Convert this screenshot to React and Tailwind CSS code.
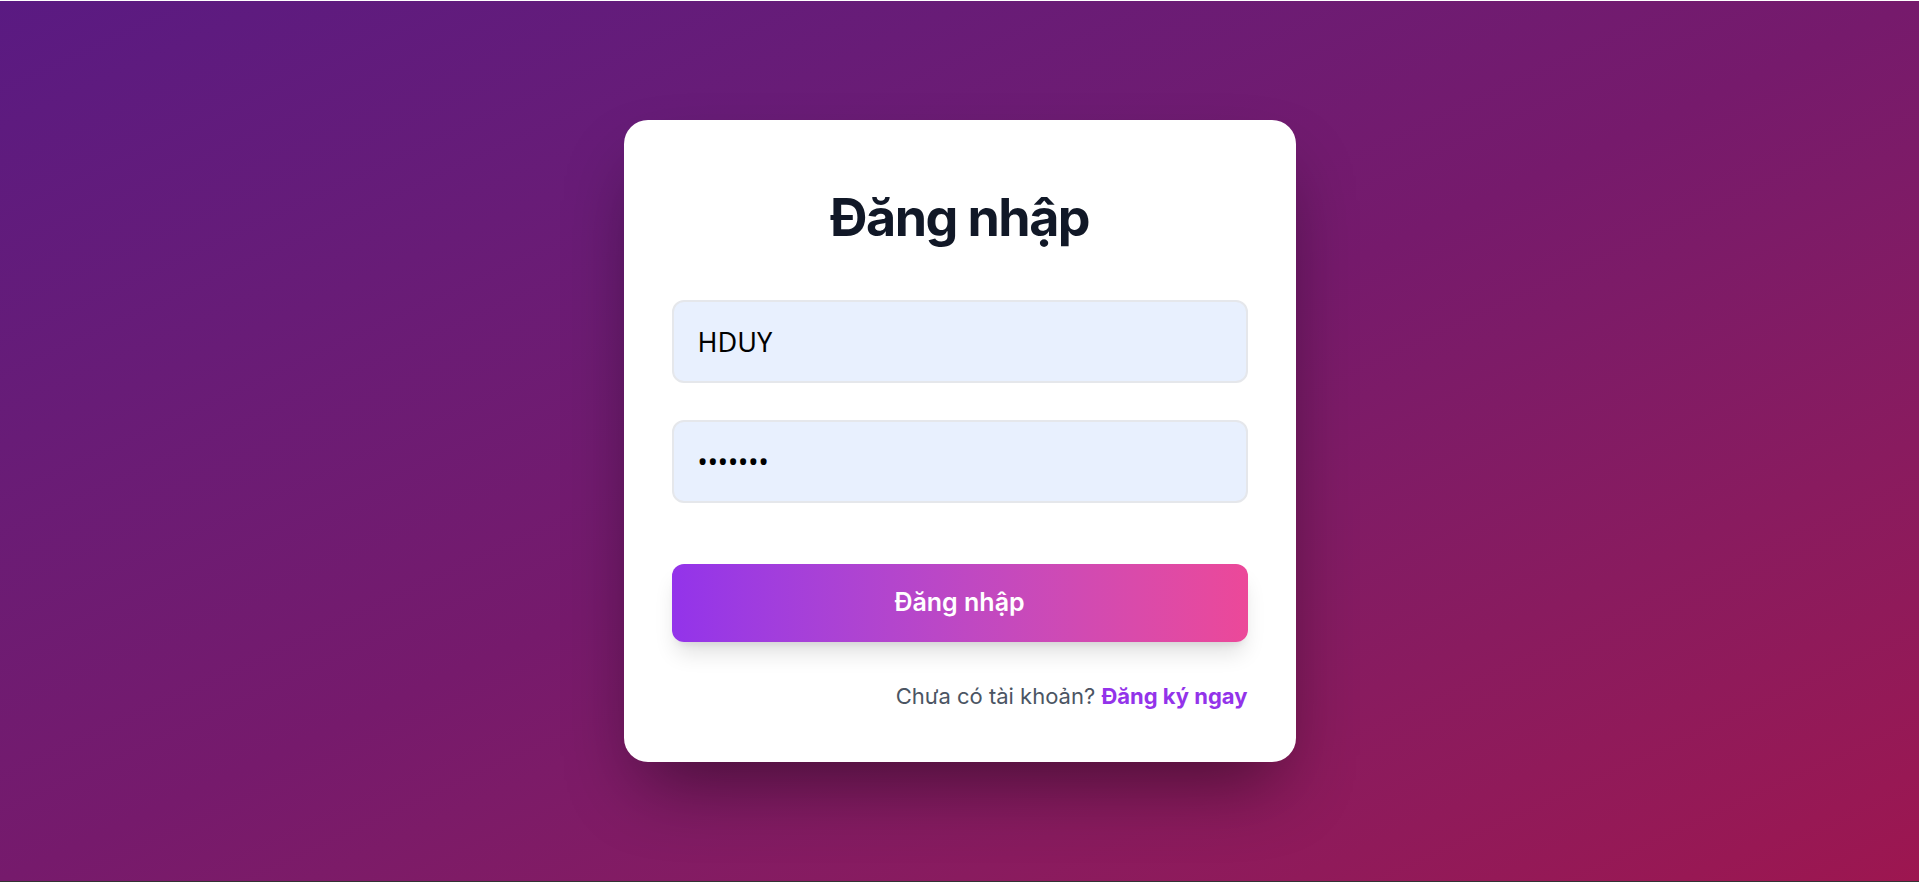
import { useState } from 'react'

export default function App() {
  const [username, setUsername] = useState('HDUY')
  const [password, setPassword] = useState('1234567')

  return (
    <div className="min-h-screen h-[882px] flex flex-col border-t border-white border-b border-b-[#333] font-['Inter',sans-serif]">
      <div className="flex-1 flex items-center justify-center bg-gradient-to-br from-[#5a1a82] via-[#761a6c] to-[#9d1650]">
        <div className="w-[672px] bg-white rounded-[24px] px-12 pt-[68px] pb-[48px] shadow-[0_37px_75px_-18px_rgba(0,0,0,0.45)]">
          <h1 className="text-[52px] leading-[60px] font-bold tracking-[-0.03em] text-[#111827] text-center mb-[52px]">Đăng nhập</h1>

          <input type="text" value={username} onChange={(e) => setUsername(e.target.value)}
            className="block w-full h-[83px] px-6 bg-[#e8f0fe] border-2 border-[#e5e7eb] rounded-[12px] text-[27px] text-black font-['Noto_Sans',sans-serif] focus:outline-none mb-[37px]" />

          <input type="password" value={password} onChange={(e) => setPassword(e.target.value)}
            className="block w-full h-[83px] px-6 bg-[#e8f0fe] border-2 border-[#e5e7eb] rounded-[12px] text-[27px] text-black font-['Noto_Sans',sans-serif] focus:outline-none mb-[61px]" />

          <button className="block w-full h-[78px] rounded-[12px] bg-gradient-to-r from-[#9333ea] to-[#ec4899] text-white text-[25px] font-semibold shadow-[0_15px_22px_-4px_rgba(0,0,0,0.12),0_6px_9px_-5px_rgba(0,0,0,0.1)]">
            Đăng nhập
          </button>

          <p className="text-right text-[22px] text-[#4b5563] mt-[36px] leading-[36px]">
            Chưa có tài khoản? <a href="#" className="font-bold text-[#9333ea]">Đăng ký ngay</a>
          </p>
        </div>
      </div>
    </div>
  )
}
